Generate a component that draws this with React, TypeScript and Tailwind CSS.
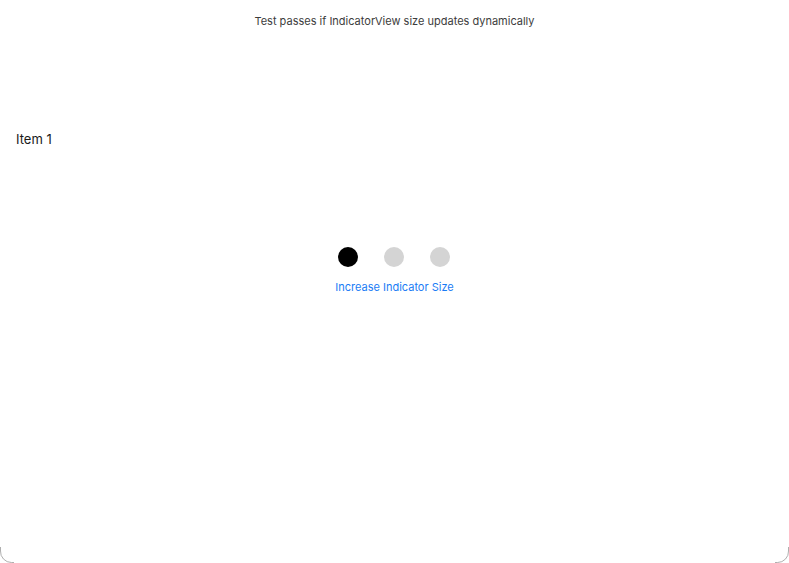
import React from "react";

export default function App() {
  return (
    <div
      className="relative w-[789px] h-[563px] bg-white overflow-hidden"
      style={{ fontFamily: "Inter, 'Liberation Sans', sans-serif" }}
    >
      <div className="flex flex-col">
        <div className="pt-[14px] h-[31px] text-center text-[11px] leading-[14px] text-[#3c3c3c]">
          Test passes if IndicatorView size updates dynamically
        </div>
        <div className="mt-[100px] pl-[16px] text-[13px] leading-[16px] text-[#1a1a1a]">Item 1</div>
        <div className="mt-[100px] flex flex-col items-center">
          <div className="flex items-center gap-[26px] -ml-[1px]">
            <div className="w-[20px] h-[20px] rounded-full bg-black blur-[0.6px]" />
            <div className="w-[20px] h-[20px] rounded-full bg-[#d4d4d4] blur-[0.6px]" />
            <div className="w-[20px] h-[20px] rounded-full bg-[#d4d4d4] blur-[0.6px]" />
          </div>
          <div className="mt-[13px] text-[11px] leading-[14px] text-[#1a7cf5]">Increase Indicator Size</div>
        </div>
      </div>
      <svg className="absolute left-0 bottom-0" width="14" height="16" viewBox="0 0 14 16">
        <path d="M0.5 0 L0.5 4 A11 11 0 0 0 11.5 15.5 L14 15.5" fill="none" stroke="#9a9a9a" strokeWidth="0.8" />
      </svg>
      <svg className="absolute right-0 bottom-0" width="14" height="16" viewBox="0 0 14 16">
        <path d="M13.5 0 L13.5 4 A11 11 0 0 1 2.5 15.5 L0 15.5" fill="none" stroke="#9a9a9a" strokeWidth="0.8" />
      </svg>
    </div>
  );
}
